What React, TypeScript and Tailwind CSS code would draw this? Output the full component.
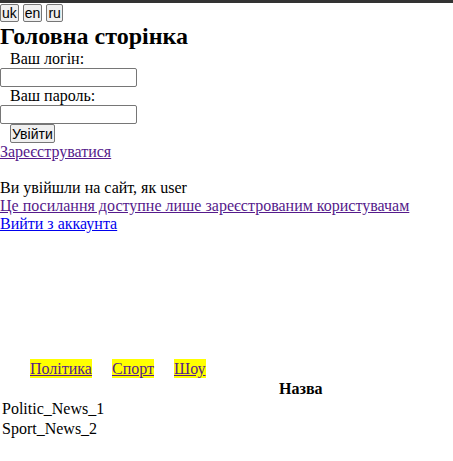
import React from "react";

const serif = { fontFamily: '"Liberation Serif", "Times New Roman", serif' };

export default function App() {
  return (
    <div className="w-[453px] h-[461px] bg-white text-black overflow-hidden" style={serif}>
      <div className="h-[3px] bg-[#333333]" />

      {/* language switch */}
      <div className="flex gap-[4px] pt-[1px] font-['Liberation_Sans',Arial,sans-serif] text-[14px] leading-[16px]">
        {["uk", "en", "ru"].map((l) => (
          <button
            key={l}
            className="h-[18px] px-[1px] border border-[#767676] rounded-[2px] bg-[#efefef] text-black"
          >
            {l}
          </button>
        ))}
      </div>

      <h1 className="text-[24px] font-bold leading-[27px] mt-[1px]">Головна сторінка</h1>

      <form className="text-[16px] leading-[18px]">
        <div className="pl-[10px]">Ваш логін:</div>
        <input className="block w-[137px] h-[19px] border border-[#767676] rounded-[2px]" />
        <div className="pl-[10px]">Ваш пароль:</div>
        <input
          type="password"
          className="block w-[137px] h-[19px] border border-[#767676] rounded-[2px]"
        />
        <div className="pl-[10px]">
          <button
            type="button"
            className="h-[19px] px-[1px] border border-[#767676] rounded-[2px] bg-[#efefef] font-['Liberation_Sans',Arial,sans-serif] text-[14px] leading-[16px]"
          >
            Увійти
          </button>
        </div>
      </form>

      <div className="text-[16px] leading-[18px]">
        <a href="#" className="text-[#551a8b] underline">Зареєструватися</a>
        <div className="h-[18px]" />
        <div>Ви увійшли на сайт, як user</div>
        <a href="#" className="block text-[#551a8b] underline">
          Це посилання доступне лише зареєстрованим користувачам
        </a>
        <a href="#" className="block text-[#0000ee] underline">Вийти з аккаунта</a>
      </div>

      <div className="mt-[126px] flex gap-[20px] pl-[30px] text-[16px] leading-[19px]">
        <a href="#" className="bg-[#ffff00] text-[#551a8b] underline">Політика</a>
        <a href="#" className="bg-[#ffff00] text-[#551a8b] underline">Спорт</a>
        <a href="#" className="bg-[#ffff00] text-[#551a8b] underline">Шоу</a>
      </div>

      <table className="text-[16px] leading-[18px] border-separate border-spacing-[2px]">
        <thead>
          <tr>
            <th className="w-[275px]" />
            <th className="font-bold text-center">Назва</th>
          </tr>
        </thead>
        <tbody>
          <tr>
            <td className="text-left">Politic_News_1</td>
            <td />
          </tr>
          <tr>
            <td className="text-left">Sport_News_2</td>
            <td />
          </tr>
        </tbody>
      </table>
    </div>
  );
}
